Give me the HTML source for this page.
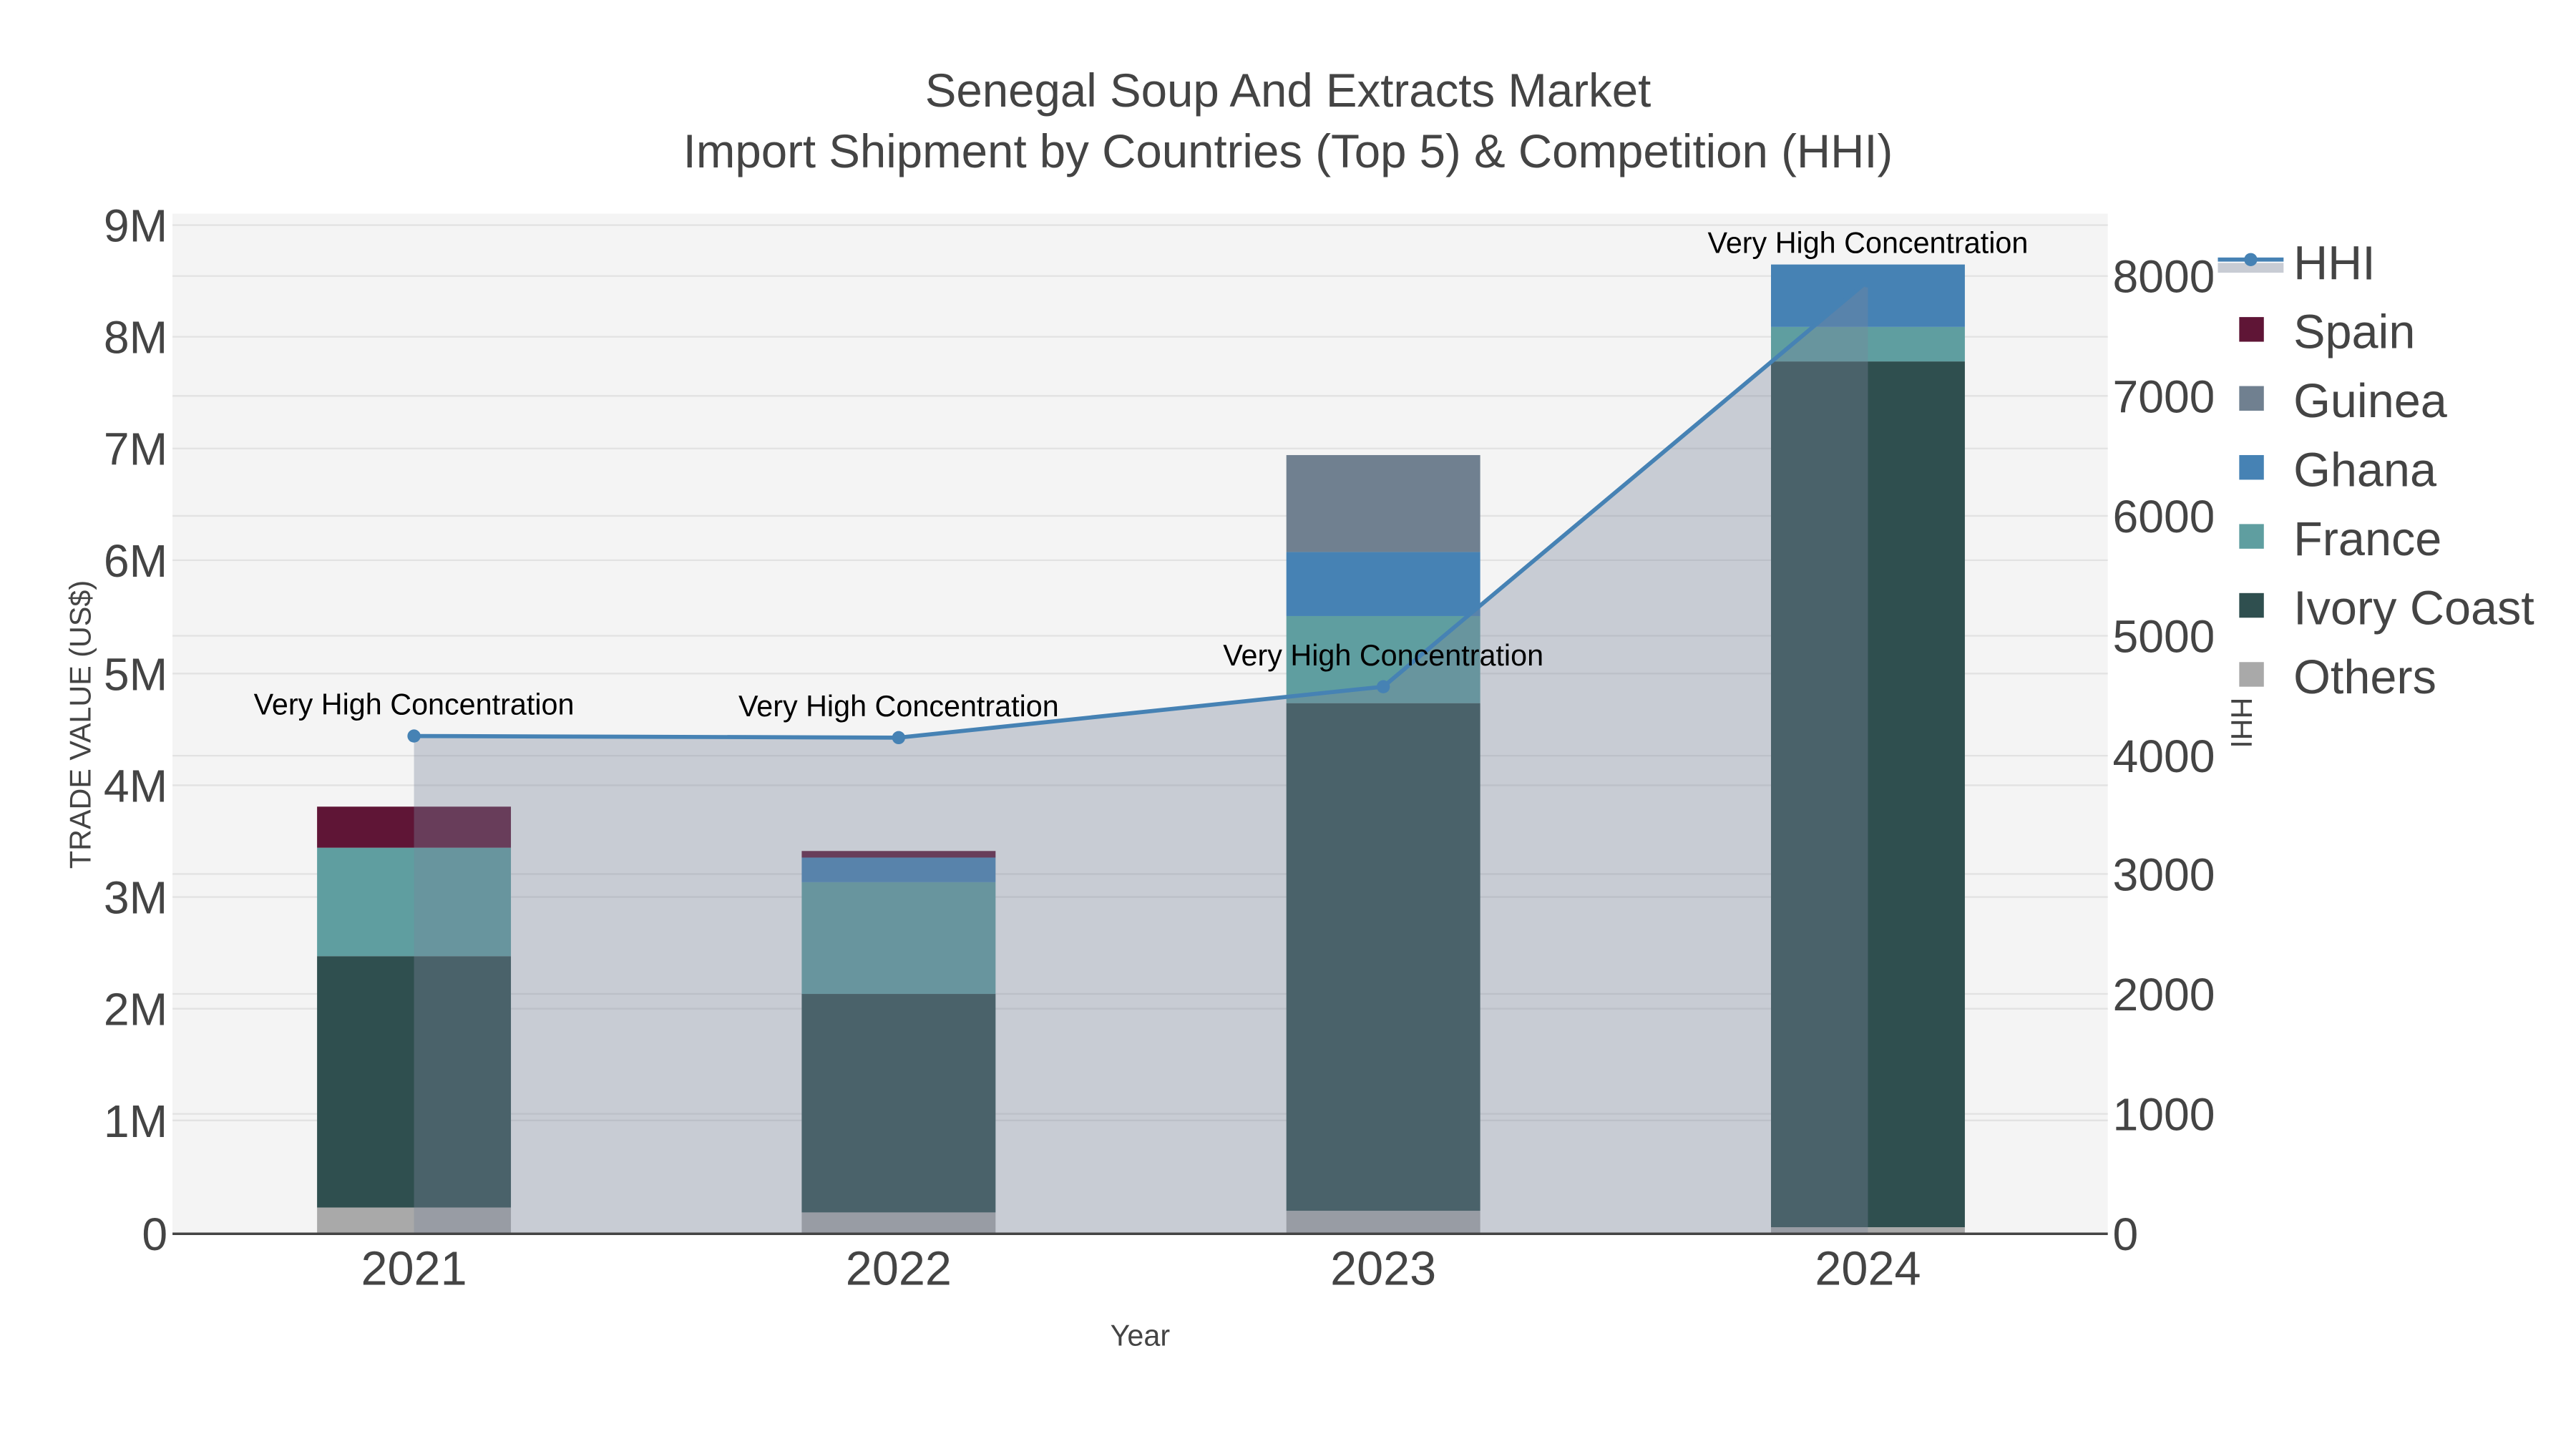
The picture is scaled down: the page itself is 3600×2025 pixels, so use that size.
<!DOCTYPE html>
<html><head><meta charset="utf-8"><style>
html,body{margin:0;padding:0;background:#fff;}
svg{display:block;font-family:"Liberation Sans",Arial,sans-serif;}
</style></head><body>
<svg width="3600" height="2025" viewBox="0 0 1568 882" preserveAspectRatio="none" xmlns="http://www.w3.org/2000/svg">
<rect width="1568" height="882" fill="#fff"/>
<text x="784" y="65" font-size="28.5" fill="#444" text-anchor="middle">Senegal Soup And Extracts Market</text>
<text x="784" y="102" font-size="28.5" fill="#444" text-anchor="middle">Import Shipment by Countries (Top 5) &amp; Competition (HHI)</text>
<rect x="105" y="130" width="1178" height="621" fill="#f4f4f4"/>
<g stroke="#e2e2e2" stroke-width="1">
<line x1="105" x2="1283" y1="137" y2="137"/><line x1="105" x2="1283" y1="205" y2="205"/><line x1="105" x2="1283" y1="273" y2="273"/><line x1="105" x2="1283" y1="341" y2="341"/><line x1="105" x2="1283" y1="410" y2="410"/><line x1="105" x2="1283" y1="478" y2="478"/><line x1="105" x2="1283" y1="546" y2="546"/><line x1="105" x2="1283" y1="614" y2="614"/><line x1="105" x2="1283" y1="682" y2="682"/>
<line x1="105" x2="1283" y1="168" y2="168"/><line x1="105" x2="1283" y1="241" y2="241"/><line x1="105" x2="1283" y1="314" y2="314"/><line x1="105" x2="1283" y1="387" y2="387"/><line x1="105" x2="1283" y1="460" y2="460"/><line x1="105" x2="1283" y1="532" y2="532"/><line x1="105" x2="1283" y1="605" y2="605"/><line x1="105" x2="1283" y1="678" y2="678"/>
</g>
<g>
<rect x="193" y="735" width="118" height="16" fill="#a9a9a9"/><rect x="193" y="582" width="118" height="153" fill="#2f4f4f"/><rect x="193" y="516" width="118" height="66" fill="#5f9ea0"/><rect x="193" y="491" width="118" height="25" fill="#5f1536"/>
<rect x="488" y="738" width="118" height="13" fill="#a9a9a9"/><rect x="488" y="605" width="118" height="133" fill="#2f4f4f"/><rect x="488" y="537" width="118" height="68" fill="#5f9ea0"/><rect x="488" y="522" width="118" height="15" fill="#4682b4"/><rect x="488" y="518" width="118" height="4" fill="#5f1536"/>
<rect x="783" y="737" width="118" height="14" fill="#a9a9a9"/><rect x="783" y="428" width="118" height="309" fill="#2f4f4f"/><rect x="783" y="375" width="118" height="53" fill="#5f9ea0"/><rect x="783" y="336" width="118" height="39" fill="#4682b4"/><rect x="783" y="277" width="118" height="59" fill="#708090"/>
<rect x="1078" y="747" width="118" height="4" fill="#a9a9a9"/><rect x="1078" y="220" width="118" height="527" fill="#2f4f4f"/><rect x="1078" y="199" width="118" height="21" fill="#5f9ea0"/><rect x="1078" y="161" width="118" height="38" fill="#4682b4"/>
</g>
<polygon points="252,448 547,449 842,418 1137,171 1137,751 252,751" fill="rgb(122,133,155)" fill-opacity="0.36"/>
<line x1="105" x2="1283" y1="751" y2="751" stroke="#444" stroke-width="1.5"/>
<polyline points="252,448 547,449 842,418 1137,171" fill="none" stroke="#4682b4" stroke-width="2.5"/>
<g fill="#4682b4"><circle cx="252" cy="448" r="4"/><circle cx="547" cy="449" r="4"/><circle cx="842" cy="418" r="4"/><circle cx="1137" cy="171" r="4"/></g>
<g font-size="18" fill="#000" text-anchor="middle">
<text x="252" y="435">Very High Concentration</text><text x="547" y="436">Very High Concentration</text><text x="842" y="405">Very High Concentration</text><text x="1137" y="154">Very High Concentration</text>
</g>
<g font-size="28" fill="#444" text-anchor="end">
<text x="102" y="147">9M</text><text x="102" y="215">8M</text><text x="102" y="283">7M</text><text x="102" y="351">6M</text><text x="102" y="420">5M</text><text x="102" y="488">4M</text><text x="102" y="556">3M</text><text x="102" y="624">2M</text><text x="102" y="692">1M</text><text x="102" y="761">0</text>
</g>
<g font-size="28" fill="#444">
<text x="1286" y="178">8000</text><text x="1286" y="251">7000</text><text x="1286" y="324">6000</text><text x="1286" y="397">5000</text><text x="1286" y="470">4000</text><text x="1286" y="542">3000</text><text x="1286" y="615">2000</text><text x="1286" y="688">1000</text><text x="1286" y="761">0</text>
</g>
<rect x="1347" y="140" width="221" height="262" fill="#fff"/>
<g font-size="29" fill="#444" text-anchor="middle">
<text x="252" y="782">2021</text><text x="547" y="782">2022</text><text x="842" y="782">2023</text><text x="1137" y="782">2024</text>
</g>
<text x="694" y="819" font-size="18" fill="#444" text-anchor="middle">Year</text>
<text transform="translate(55,441) rotate(-90)" font-size="18" fill="#444" text-anchor="middle">TRADE VALUE (US$)</text>
<text transform="translate(1358,440) rotate(90)" font-size="18" fill="#444" text-anchor="middle">HHI</text>
<rect x="1350" y="160" width="40" height="6" fill="#c8ccd4"/>
<line x1="1350" x2="1390" y1="158" y2="158" stroke="#4682b4" stroke-width="2.5"/>
<circle cx="1370" cy="158" r="4" fill="#4682b4"/>
<rect x="1363" y="193" width="15" height="15" fill="#5f1536"/>
<rect x="1363" y="235" width="15" height="15" fill="#708090"/>
<rect x="1363" y="277" width="15" height="15" fill="#4682b4"/>
<rect x="1363" y="319" width="15" height="15" fill="#5f9ea0"/>
<rect x="1363" y="361" width="15" height="15" fill="#2f4f4f"/>
<rect x="1363" y="403" width="15" height="15" fill="#a9a9a9"/>
<g font-size="29" fill="#444">
<text x="1396" y="170">HHI</text><text x="1396" y="212">Spain</text><text x="1396" y="254">Guinea</text><text x="1396" y="296">Ghana</text><text x="1396" y="338">France</text><text x="1396" y="380">Ivory Coast</text><text x="1396" y="422">Others</text>
</g>
</svg>
</body></html>
